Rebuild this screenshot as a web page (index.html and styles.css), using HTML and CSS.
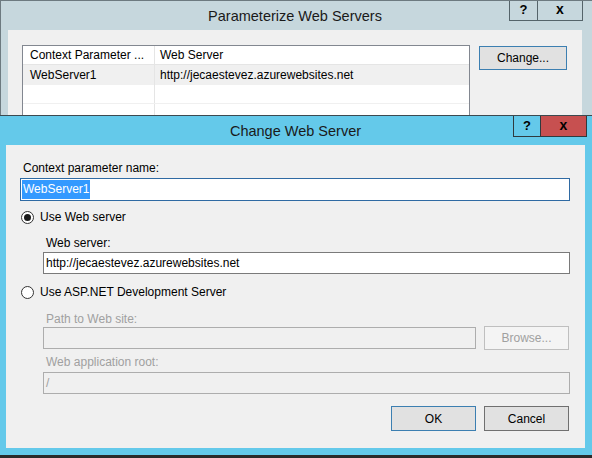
FILE: index.html
```html
<!DOCTYPE html>
<html>
<head>
<meta charset="utf-8">
<title>Change Web Server</title>
<link rel="stylesheet" href="styles.css">
</head>
<body>
<div class="desktop">
  <div class="win back">
    <div class="titlebar">
      <span class="title">Parameterize Web Servers</span>
      <div class="caps">
        <span class="cap help">?</span>
        <span class="cap close">x</span>
      </div>
    </div>
    <div class="client back-client">
      <div class="list">
        <div class="lrow lhead">
          <div class="lcell c1">Context Parameter ...</div>
          <div class="lcell c2">Web Server</div>
        </div>
        <div class="lrow sel">
          <div class="lcell c1">WebServer1</div>
          <div class="lcell c2">http://jecaestevez.azurewebsites.net</div>
        </div>
        <div class="lrow">
          <div class="lcell c1"></div>
          <div class="lcell c2"></div>
        </div>
        <div class="lrow">
          <div class="lcell c1"></div>
          <div class="lcell c2"></div>
        </div>
      </div>
      <button class="btn primary change">Change...</button>
    </div>
  </div>

  <div class="win front">
    <div class="titlebar">
      <span class="title">Change Web Server</span>
      <div class="caps">
        <span class="cap help">?</span>
        <span class="cap close red">x</span>
      </div>
    </div>
    <div class="client front-client">
      <div class="label">Context parameter name:</div>
      <div class="field focused f1"><span class="selected">WebServer1</span></div>

      <div class="radio-row r1">
        <span class="radio checked"></span>
        <span class="rlabel">Use Web server</span>
      </div>
      <div class="sub">
        <div class="label l-web">Web server:</div>
        <div class="field f2">http://jecaestevez.azurewebsites.net</div>
      </div>

      <div class="radio-row r2">
        <span class="radio"></span>
        <span class="rlabel">Use ASP.NET Development Server</span>
      </div>
      <div class="sub">
        <div class="label disabled l-path">Path to Web site:</div>
        <div class="path-row">
          <div class="field disabled grow"></div>
          <button class="btn disabled browse">Browse...</button>
        </div>
        <div class="label disabled l-root">Web application root:</div>
        <div class="field disabled f3">/</div>
      </div>

      <div class="actions">
        <button class="btn primary">OK</button>
        <button class="btn">Cancel</button>
      </div>
    </div>
  </div>
</div>
</body>
</html>
```

FILE: styles.css
```css
* { box-sizing: border-box; }

html, body {
  margin: 0;
  padding: 0;
  background: #2a2a2a;
}

body {
  font-family: "Liberation Sans", Arial, sans-serif;
  font-size: 12px;
  color: #000;
}

.desktop {
  position: relative;
  width: 592px;
  height: 458px;
  overflow: hidden;
}

/* ---------- windows ---------- */
.win {
  display: flex;
  flex-direction: column;
}

.back {
  width: 592px;
  height: 458px;
  background: #c6d7dd;
  border-top: 1px solid #6d7a80;
  border-left: 1px solid #6d7a80;
  padding: 0 10px 0 7px;
}

.front {
  position: absolute;
  left: 0;
  top: 115px;
  width: 592px;
  height: 343px;
  background: #64c9ea;
  border-top: 1px solid #3c4a50;
  border-bottom: 3px solid #2a2a2a;
  padding: 0 7px 7px 6px;
}

.titlebar {
  height: 29px;
  display: grid;
  grid-template-columns: 1fr auto 1fr;
  align-items: center;
}

.titlebar .title {
  grid-column: 2;
  font-size: 14.5px;
  color: #1a1a1a;
  white-space: nowrap;
}

.caps {
  grid-column: 3;
  justify-self: end;
  align-self: start;
  display: flex;
  height: 21px;
}

.back .caps { margin-right: -1px; height: 20px; }
.front .caps { margin-right: -2px; }

.cap {
  display: flex;
  align-items: center;
  justify-content: center;
  border: 1px solid #55646a;
  border-top: none;
  font-weight: bold;
  font-size: 13px;
  line-height: 1;
  color: #000;
}

.cap.help {
  width: 28px;
  border-right: none;
  padding-bottom: 2px;
}

.cap.close {
  width: 46px;
  font-size: 14px;
  padding-bottom: 3px;
}

.front .cap { border-color: #2f3a3e; }
.front .cap.help { width: 27px; }
.front .cap.close { width: 47px; }
.cap.red { background: #c75050; }

.client {
  background: #f0f0f0;
  flex: 1;
}

/* ---------- back window client ---------- */
.back-client {
  display: flex;
  align-items: flex-start;
  padding: 15px 0 0 14px;
  gap: 9px;
}

.list {
  width: 448px;
  height: 120px;
  border: 1px solid #828790;
  background: #fff;
  padding-top: 0;
}

.lrow {
  display: flex;
  height: 19px;
  border-bottom: 1px solid #f0f0f0;
}

.lrow.lhead {
  height: 19px;
  border-bottom: 1px solid #e5e5e5;
}

.lrow.sel {
  height: 20px;
  background: #f0f0f0;
  border-bottom: none;
}

.lcell {
  display: flex;
  align-items: center;
  white-space: nowrap;
  overflow: hidden;
}

.lcell.c1 {
  width: 132px;
  padding-left: 7px;
  border-right: 1px solid #e5e5e5;
}

.lcell.c2 {
  flex: 1;
  padding-left: 5px;
}

.btn {
  font-family: "Liberation Sans", Arial, sans-serif;
  font-size: 12px;
  color: #000;
  width: 85px;
  height: 25px;
  padding: 0;
  margin: 0;
  background: #e1e1e1;
  border: 1px solid #707070;
  border-radius: 0;
}

.btn.primary { border-color: #3c7fb1; }

.btn.change {
  width: 88px;
  height: 24px;
  margin-top: 1px;
}

.btn.disabled {
  background: #f4f4f4;
  border-color: #bfbfbf;
  color: #a0a0a0;
}

/* ---------- front window client ---------- */
.front-client {
  display: flex;
  flex-direction: column;
  padding: 16px 15px 0 14px;
}

.label {
  height: 14px;
  line-height: 14px;
  margin-left: 3px;
  white-space: nowrap;
}

.label.disabled { color: #a0a0a0; }

.field {
  height: 22px;
  display: flex;
  align-items: center;
  padding: 0 2px;
  background: #fff;
  border: 1px solid #7a7a7a;
  white-space: nowrap;
}

.field.f1 {
  height: 23px;
  margin-top: 3px;
  border-color: #2f6aa3;
  padding-left: 1px;
}

.selected {
  background: #3399ff;
  color: #fff;
  line-height: 19px;
  padding: 0 1px;
}

.field.disabled {
  background: #f0f0f0;
  border-color: #adadad;
  color: #a0a0a0;
}

.radio-row {
  height: 16px;
  display: flex;
  align-items: center;
  padding-left: 1px;
}

.radio-row.r1 { margin-top: 8px; }
.radio-row.r2 { margin-top: 10px; }

.radio {
  width: 13px;
  height: 13px;
  border-radius: 50%;
  border: 1px solid #333;
  background: #fff;
  display: flex;
  align-items: center;
  justify-content: center;
  margin-right: 6px;
}

.radio.checked::after {
  content: "";
  width: 7px;
  height: 7px;
  border-radius: 50%;
  background: #1a1a1a;
}

.sub {
  display: flex;
  flex-direction: column;
  margin-left: 23px;
}

.l-web { margin-top: 11px; }
.field.f2 { margin-top: 2px; }
.l-path { margin-top: 12px; }

.path-row {
  height: 24px;
  display: flex;
  align-items: center;
  gap: 8px;
}

.path-row .grow { flex: 1; }

.btn.browse {
  height: 24px;
  margin-right: 1px;
}

.l-root { margin-top: 5px; }
.field.f3 { margin-top: 3px; }

.actions {
  display: flex;
  justify-content: flex-end;
  gap: 8px;
  margin-top: 12px;
  padding-right: 1px;
}
```
